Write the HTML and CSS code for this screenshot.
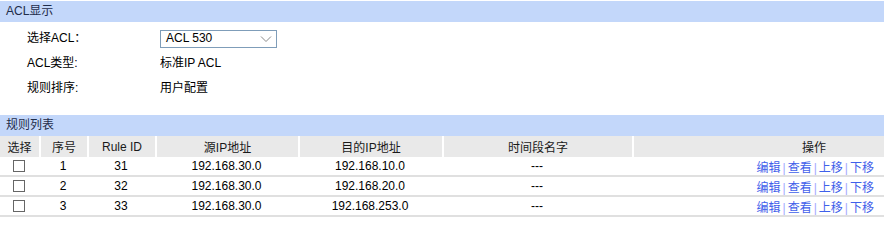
FILE: index.html
```html
<!DOCTYPE html>
<html>
<head>
<meta charset="utf-8">
<link rel="stylesheet" href="styles.css">
</head>
<body>
<div class="bar">ACL显示</div>
<div class="form">
  <div class="label">选择ACL：</div>
  <div class="value">
    <div class="select"><span>ACL 530</span>
      <svg class="caret" width="12" height="8" viewBox="0 0 12 8"><path d="M1 1.5 L6 6.5 L11 1.5" fill="none" stroke="#8a8a8a" stroke-width="1"/></svg>
    </div>
  </div>
  <div class="label">ACL类型:</div>
  <div class="value">标准IP ACL</div>
  <div class="label">规则排序:</div>
  <div class="value">用户配置</div>
</div>
<div class="bar bar2">规则列表</div>
<table class="list">
  <colgroup>
    <col style="width:39px"><col style="width:48px"><col style="width:68px"><col style="width:143px"><col style="width:144px"><col style="width:190px"><col style="width:252px">
  </colgroup>
  <thead>
    <tr><th>选择</th><th>序号</th><th>Rule ID</th><th>源IP地址</th><th>目的IP地址</th><th>时间段名字</th><th class="ops-h">操作</th></tr>
  </thead>
  <tbody>
    <tr><td><span class="cb"></span></td><td>1</td><td>31</td><td>192.168.30.0</td><td>192.168.10.0</td><td>---</td><td class="ops"><a>编辑</a><i>|</i><a>查看</a><i>|</i><a>上移</a><i>|</i><a>下移</a></td></tr>
    <tr><td><span class="cb"></span></td><td>2</td><td>32</td><td>192.168.30.0</td><td>192.168.20.0</td><td>---</td><td class="ops"><a>编辑</a><i>|</i><a>查看</a><i>|</i><a>上移</a><i>|</i><a>下移</a></td></tr>
    <tr><td><span class="cb"></span></td><td>3</td><td>33</td><td>192.168.30.0</td><td>192.168.253.0</td><td>---</td><td class="ops"><a>编辑</a><i>|</i><a>查看</a><i>|</i><a>上移</a><i>|</i><a>下移</a></td></tr>
  </tbody>
</table>
</body>
</html>
```
FILE: styles.css
```css
html, body {
  margin: 0;
  padding: 0;
  background: #fff;
}
body {
  font-family: "Liberation Sans", Arial, "Noto Sans CJK SC", sans-serif;
  font-size: 12px;
  color: #000;
  padding-top: 1px;
}
.bar {
  height: 21px;
  line-height: 21px;
  background: #c3d7fa;
  padding-left: 6px;
  color: #1f2d4a;
  font-size: 12px;
}
.form {
  display: grid;
  grid-template-columns: 133px 1fr;
  grid-auto-rows: 25px;
  padding: 4px 0 0 27px;
  height: 93px;
  box-sizing: border-box;
  align-items: center;
}
.label, .value {
  line-height: 25px;
}
.select {
  width: 117px;
  height: 18px;
  box-sizing: border-box;
  border: 1px solid #7f9db9;
  display: flex;
  align-items: center;
  justify-content: space-between;
  padding: 0 4px 0 5px;
  color: #000;
  font-size: 12px;
}
.caret {
  display: block;
}
.list {
  width: 884px;
  border-collapse: separate;
  border-spacing: 0;
  table-layout: fixed;
}
.list th {
  background: #e9e9e9;
  font-weight: normal;
  height: 21px;
  padding: 0;
  text-align: center;
  color: #1a1a1a;
  border-left: 2px solid #fff;
}
.list th:first-child {
  border-left: none;
}
.list th.ops-h {
  text-align: right;
  padding-right: 58px;
}
.list td {
  height: 18px;
  padding: 0;
  text-align: center;
  border-bottom: 2px solid #e0e0e0;
  color: #000;
}
.cb {
  display: block;
  width: 10px;
  height: 10px;
  border: 1px solid #666;
  margin: 0 auto 0 13px;
}
.list td.ops {
  text-align: right;
  padding-right: 10px;
}
.ops a {
  color: #3f60ea;
}
.ops i {
  font-style: normal;
  color: #a3a8ff;
  margin: 0 2px;
}
```
